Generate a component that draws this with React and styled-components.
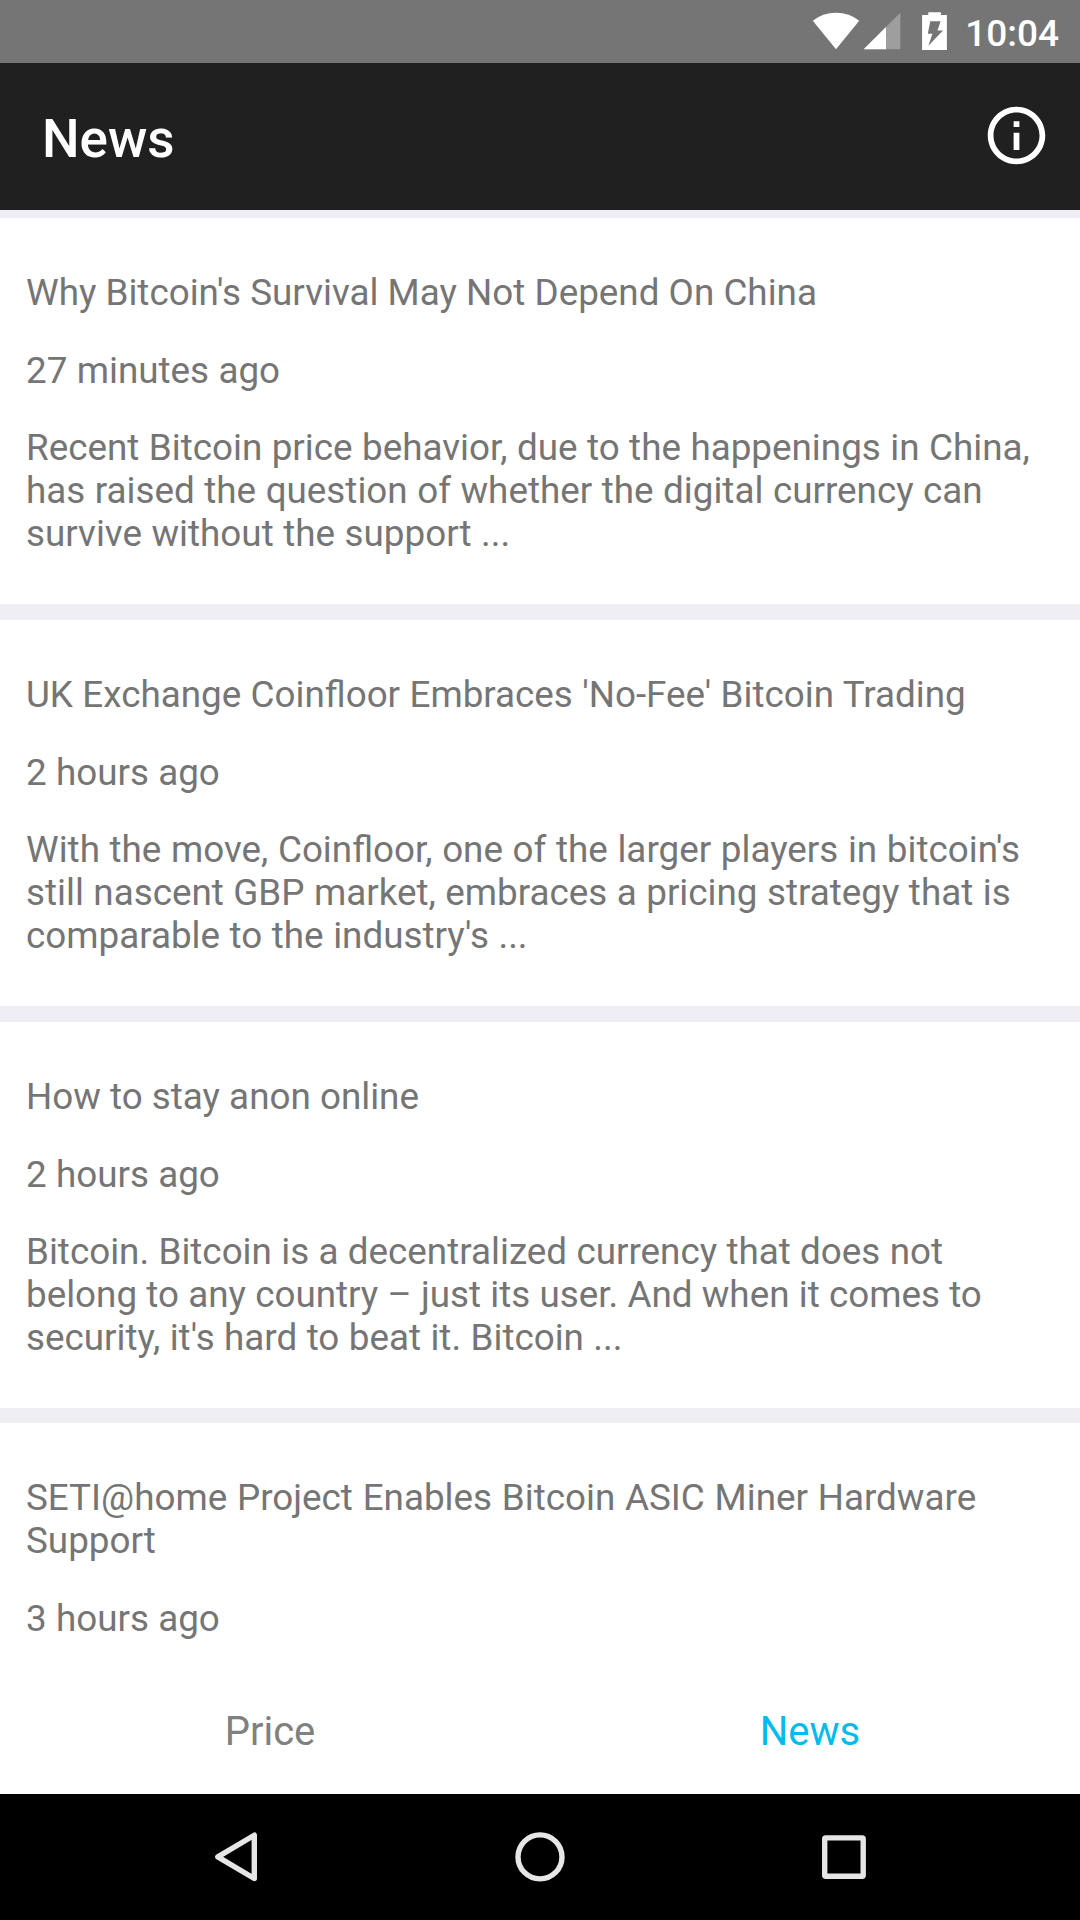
import React from "react";
import styled, { createGlobalStyle } from "styled-components";

const GlobalStyle = createGlobalStyle`
  html, body { margin: 0; padding: 0; background: #fff; }
  * { box-sizing: border-box; }
`;

const Screen = styled.div`
  display: flex;
  flex-direction: column;
  width: 1080px;
  height: 1920px;
  overflow: hidden;
  background: #fff;
  font-family: Roboto, "Noto Sans", sans-serif;
`;

const StatusBar = styled.div`
  display: flex;
  flex: none;
  justify-content: flex-end;
  height: 63px;
  padding-right: 21px;
  background: #757575;
  color: #fff;
`;

const StatusIcons = styled.svg`
  display: block;
  width: 140px;
  height: 63px;
  margin-right: 15px;
`;

const Clock = styled.div`
  font-size: 37px;
  font-weight: 500;
  line-height: 43px;
  padding-top: 12px;
`;

const Header = styled.header`
  display: flex;
  flex: none;
  align-items: center;
  justify-content: space-between;
  height: 147px;
  padding: 0 29px 0 42px;
  background: #202020;
  color: #fff;
`;

const HeaderTitle = styled.h1`
  margin: 0;
  padding-top: 4px;
  font-size: 53px;
  font-weight: 500;
  line-height: 62px;
`;

const InfoButton = styled.button`
  display: flex;
  padding: 0 0 2px;
  border: 0;
  background: none;
  color: inherit;

  svg {
    display: block;
    width: 69px;
    height: 69px;
  }
`;

const Feed = styled.main`
  flex: 1;
  min-height: 0;
  overflow: hidden;
  background: #efeef4;
  padding-top: 8px;
`;

const Card = styled.article`
  display: flex;
  flex-direction: column;
  gap: 34.6px;
  height: 386px;
  margin-bottom: ${(p) => p.$gap}px;
  padding: 53px 26px 0;
  background: #fff;
`;

const Paragraph = styled.p`
  margin: 0;
  color: #757575;
  font-size: 36.8px;
  line-height: 43px;
`;

const Line = styled.span`
  display: block;
  white-space: nowrap;
  word-spacing: ${(p) => p.$spacing}px;
`;

const Tabs = styled.nav`
  display: flex;
  flex: none;
  height: 126px;
  background: #fff;
`;

const Tab = styled.button`
  flex: 1;
  padding: 0;
  border: 0;
  background: none;
  font: 400 40px/47px Roboto, "Noto Sans", sans-serif;
  color: ${(p) => (p.$active ? "#00bbec" : "#808080")};
`;

const SystemBar = styled.div`
  display: flex;
  flex: none;
  align-items: center;
  justify-content: center;
  gap: 244px;
  height: 126px;
  background: #000;

  svg {
    display: block;
    width: 60px;
    height: 60px;
    fill: none;
    stroke: #e6e6e6;
    stroke-width: 5.4px;
    stroke-linejoin: round;
  }
`;

// Each text line carries its own word spacing, in pixels.
const articles = [
  {
    title: [["Why Bitcoin's Survival May Not Depend On China", 0.05]],
    age: [["27 minutes ago", 0.2]],
    text: [
      ["Recent Bitcoin price behavior, due to the happenings in China,", 0.35],
      ["has raised the question of whether the digital currency can", 0.4],
      ["survive without the support ...", 0.4],
    ],
    gap: 16,
  },
  {
    title: [["UK Exchange Coinfloor Embraces 'No-Fee' Bitcoin Trading", 0.25]],
    age: [["2 hours ago", 0.1]],
    text: [
      ["With the move, Coinfloor, one of the larger players in bitcoin's", 0.5],
      ["still nascent GBP market, embraces a pricing strategy that is", 0.35],
      ["comparable to the industry's ...", 0.4],
    ],
    gap: 16,
  },
  {
    title: [["How to stay anon online", 0]],
    age: [["2 hours ago", 0.1]],
    text: [
      ["Bitcoin. Bitcoin is a decentralized currency that does not", 0.2],
      ["belong to any country – just its user. And when it comes to", 0.1],
      ["security, it's hard to beat it. Bitcoin ...", 0.3],
    ],
    gap: 15,
  },
  {
    title: [
      ["SETI@home Project Enables Bitcoin ASIC Miner Hardware", 0.65],
      ["Support", 0],
    ],
    age: [["3 hours ago", 0.1]],
    gap: 16,
  },
];

function TextBlock({ lines }) {
  return (
    <Paragraph>
      {lines.map(([text, spacing]) => (
        <Line key={text} $spacing={spacing}>
          {text}
        </Line>
      ))}
    </Paragraph>
  );
}

export default function App() {
  return (
    <Screen>
      <GlobalStyle />
      <StatusBar>
        <StatusIcons viewBox="810 0 140 63" fill="#fff">
          <path d="M836 49.3 L812.8 20.8 Q822.5 12.8 836 12.8 Q849.5 12.8 859.2 20.8 Z" />
          <path d="M900.3 12.8 V49.2 H863.7 Z" opacity="0.3" />
          <path d="M886 27 V49.2 H863.7 Z" />
          <path
            fillRule="evenodd"
            d="M928.3 12.3 H940.9 V15 H946.9 V50 H922.1 V15 H928.3 Z M930.3 21.3 L927.8 33.8 H932.4 L928.4 45.8 L943 30.4 H937.4 L940.6 21.3 Z"
          />
        </StatusIcons>
        <Clock>10:04</Clock>
      </StatusBar>
      <Header>
        <HeaderTitle>News</HeaderTitle>
        <InfoButton aria-label="Info">
          <svg viewBox="0 0 24 24" fill="currentColor">
            <path d="M11 17h2v-6h-2v6zM12 2C6.48 2 2 6.48 2 12s4.48 10 10 10 10-4.48 10-10S17.52 2 12 2zm0 18c-4.41 0-8-3.59-8-8s3.59-8 8-8 8 3.59 8 8-3.59 8-8 8zM11 9h2V7h-2v2z" />
          </svg>
        </InfoButton>
      </Header>
      <Feed>
        {articles.map((a) => (
          <Card key={a.title[0][0]} $gap={a.gap}>
            <TextBlock lines={a.title} />
            <TextBlock lines={a.age} />
            {a.text && <TextBlock lines={a.text} />}
          </Card>
        ))}
      </Feed>
      <Tabs>
        <Tab>Price</Tab>
        <Tab $active>News</Tab>
      </Tabs>
      <SystemBar>
        <svg viewBox="206 1827 60 60">
          <path d="M254.3 1835.2 V1878.5 L217.8 1856.9 Z" />
        </svg>
        <svg viewBox="510 1827 60 60">
          <circle cx="540" cy="1856.9" r="22" />
        </svg>
        <svg viewBox="814 1827 60 60">
          <rect x="824.7" y="1837.9" width="38.5" height="38.4" rx="1" />
        </svg>
      </SystemBar>
    </Screen>
  );
}
